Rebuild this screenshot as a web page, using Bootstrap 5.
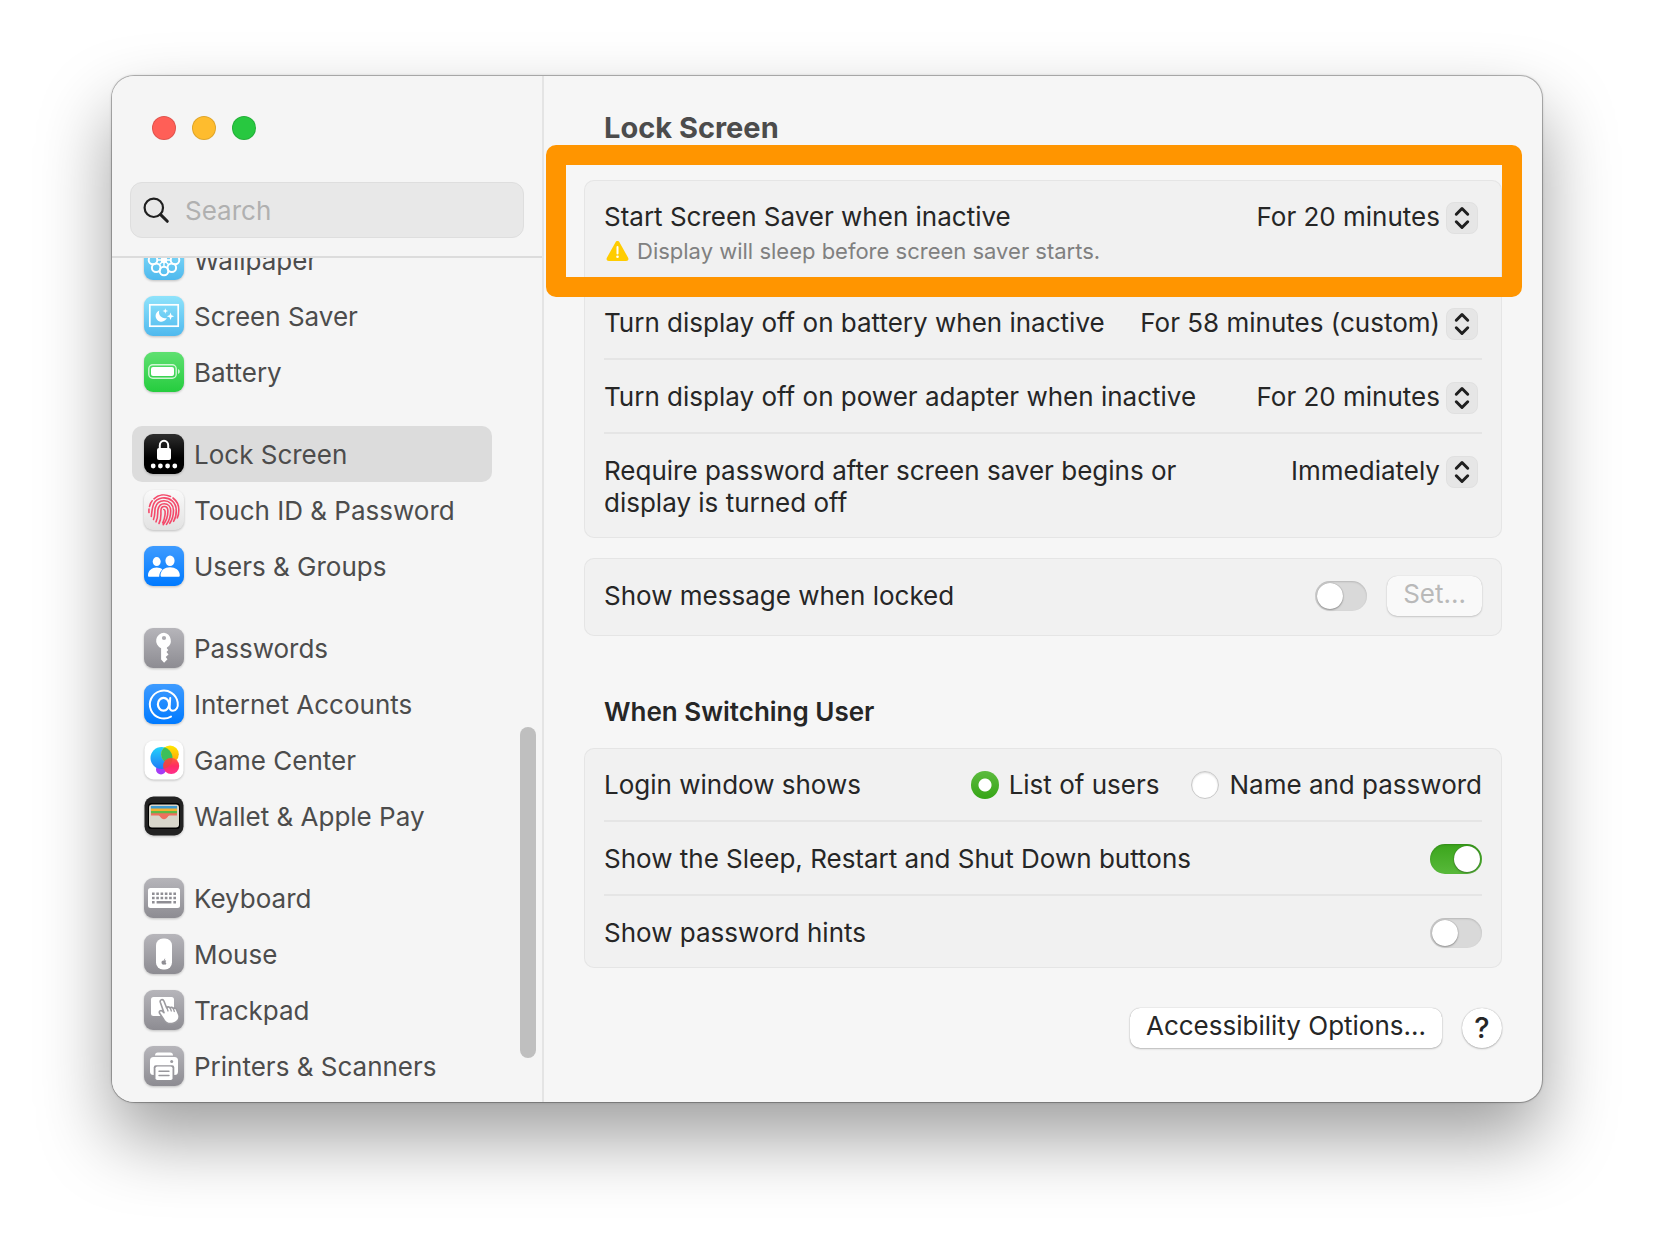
<!DOCTYPE html>
<html lang="en">
<head>
<meta charset="utf-8">
<meta name="viewport" content="width=device-width, initial-scale=1">
<title>Lock Screen</title>
<link href="https://cdn.jsdelivr.net/npm/bootstrap@5.3.0/dist/css/bootstrap.min.css" rel="stylesheet">
<style>
body{background:#fff;color:#262626;font:400 26px/32px Inter,"Liberation Sans",sans-serif;padding:76px 112px 148px}
.window{background:#f6f6f6;border-radius:22px;box-shadow:0 0 0 1px rgba(0,0,0,.22),0 0 3px rgba(0,0,0,.3),0 36px 72px rgba(0,0,0,.38)}
.sidebar{width:432px;color:#4c4c4c;background:#f5f5f5;border-right:2px solid #e4e4e4;border-radius:22px 0 0 22px}
.side-head{padding:40px 18px 18px;border-bottom:2px solid #dcdcdc}
.lights{gap:16px;padding-left:22px;margin-bottom:42px}
.light{width:24px;height:24px;border:1px solid rgba(0,0,0,.12);border-radius:50%;padding:0}
.light.red{background:#ff5f57}.light.amber{background:#febc2e}.light.green{background:#28c840}
.search{height:56px;background:#e8e8e8;border:1px solid #dedede;border-radius:12px;padding:0 12px;gap:14px}
.search input{background:none;border:0;outline:0;color:#262626;padding:2px 0 0;min-width:0}
.search input::placeholder{color:#b0b0b0;opacity:1}
.side-scroll{overflow:hidden;padding:0 50px 8px 20px}
.side-list{margin-top:-26px;gap:26px}
.side-link{height:56px;padding:2px 0 0 12px;gap:10px;border-radius:10px;color:#4c4c4c;text-decoration:none;white-space:nowrap}
.side-link.active{background:#dcdcdc}
.side-link svg{width:40px;height:40px;margin-bottom:2px;flex:none;filter:drop-shadow(0 1px 1px rgba(0,0,0,.22));overflow:visible}
.thumb{width:16px;height:331px;right:6px;bottom:44px;border-radius:8px;background:#bfbfbf}
.content{padding:32px 40px 54px;min-width:0}
.content h1{font-size:29px;line-height:40px;font-weight:700;color:#4c4c4c;margin:0 0 32px;padding-left:20px}
.content h2{font-size:26px;line-height:32px;font-weight:600;margin:60px 0 20px;padding-left:20px}
.panel{--bs-card-bg:#f1f1f1;--bs-card-border-radius:10px;box-shadow:inset 0 0 0 1px #e5e5e5;padding:0 20px;color:inherit}
.panel + .panel{margin-top:20px}
.setting{padding:21px 0 19px;border-bottom:2px solid #e5e5e5;gap:16px}
.setting:last-child{border-bottom:0}
.panel .setting.tight{padding:18px 0 20px;gap:20px}
.note{font-size:22px;color:#808080;gap:6px;margin:2px 0 -2px}
.callout-frame{inset:-35px -40px -13px -58px;border:20px solid #ff9500;border-radius:10px;pointer-events:none;z-index:2}
.popup{padding-right:4px}
.popup select{appearance:none;border:0;background:none;color:inherit;font:inherit;height:32px;padding:0 38px 0 0;text-align-last:right;outline:0}
.popup svg{right:4px;top:1px;pointer-events:none}
.toggle.form-check-input{appearance:none;width:52px;height:30px;margin:0;border:0;border-radius:15px;background:#d9d9d9;box-shadow:inset 0 1px 2px rgba(0,0,0,.16);padding:2px;display:block}
.toggle::before{content:"";display:block;width:26px;height:26px;border-radius:50%;background:#fff;box-shadow:0 0 1px rgba(0,0,0,.4),0 1px 2px rgba(0,0,0,.3)}
.toggle.form-check-input:checked{background:linear-gradient(#3ba51c,#58b93a)}
.toggle:checked::before{margin-left:22px}
.choices{gap:32px}
.choice{gap:10px}
.choice .form-check-input{width:28px;height:28px;margin:0;border:1px solid #c8c8c8;background:#fff;box-shadow:inset 0 1px 2px rgba(0,0,0,.15);float:none}
.choice .form-check-input:checked{border:0;background:radial-gradient(circle,#fff 6px,transparent 7px),linear-gradient(#5cbb3e,#36a516);box-shadow:none}
.push{--bs-btn-bg:#fff;--bs-btn-color:#262626;--bs-btn-border-width:0;--bs-btn-font-size:26px;--bs-btn-line-height:32px;--bs-btn-border-radius:10px;--bs-btn-disabled-bg:#f9f9f9;--bs-btn-disabled-color:#b9b9b9;--bs-btn-disabled-opacity:1;height:40px;padding:2px 16px 6px;box-shadow:0 0 1px rgba(0,0,0,.35),0 1px 2px rgba(0,0,0,.22)}
.push:disabled{box-shadow:0 0 1px rgba(0,0,0,.2),0 1px 2px rgba(0,0,0,.16)}
.help{width:40px;border-radius:50%;padding:4px 0;font-weight:500;--bs-btn-font-size:29px}
.foot{gap:20px;margin-top:40px}
</style>
</head>
<body>
<svg width="0" height="0" class="position-absolute" aria-hidden="true">
  <defs>
    <linearGradient id="gSky" x2="0" y2="1"><stop stop-color="#8fe3fb"/><stop offset="1" stop-color="#4fb9ee"/></linearGradient>
    <linearGradient id="gGreen" x2="0" y2="1"><stop stop-color="#5fe071"/><stop offset="1" stop-color="#25cc3e"/></linearGradient>
    <linearGradient id="gBlack" x2="0" y2="1"><stop stop-color="#2e2e2e"/><stop offset=".6" stop-color="#000"/></linearGradient>
    <linearGradient id="gPale" x2="0" y2="1"><stop stop-color="#fafafa"/><stop offset="1" stop-color="#e2e2e2"/></linearGradient>
    <linearGradient id="gBlue" x2="0" y2="1"><stop stop-color="#3e9bff"/><stop offset="1" stop-color="#007aff"/></linearGradient>
    <linearGradient id="gGrey" x2="0" y2="1"><stop stop-color="#b6b5ba"/><stop offset="1" stop-color="#8d8c92"/></linearGradient>
    <linearGradient id="gcBlue" x2="0" y2="1"><stop stop-color="#22d3fb"/><stop offset="1" stop-color="#1f7bf6"/></linearGradient>
    <linearGradient id="gcYellow" x2="0" y2="1"><stop stop-color="#ffe800"/><stop offset="1" stop-color="#ff9d0a"/></linearGradient>
    <linearGradient id="gcRed" x2="0" y2="1"><stop stop-color="#ff5a3c"/><stop offset=".5" stop-color="#ff2d62"/><stop offset="1" stop-color="#ff2f8e"/></linearGradient>
    <clipPath id="gcClip"><circle cx="17.500" cy="18" r="11"/></clipPath>
    <symbol id="stepper" viewBox="0 0 32 32"><rect x=".5" y=".5" width="31" height="31" rx="7.500" fill="#e6e6e6" stroke="#e0e0e0"/><path d="M10.300 12.200 16 6.500l5.700 5.700M10.300 19.800l5.700 5.700 5.700-5.700" fill="none" stroke="#1f1f1f" stroke-width="3" stroke-linecap="round" stroke-linejoin="round"/></symbol>
  </defs>
</svg>

<div class="window d-flex">
  <aside class="sidebar flex-shrink-0 d-flex flex-column position-relative">
    <div class="side-head">
      <div class="lights d-flex">
        <button class="light red" type="button" aria-label="Close"></button>
        <button class="light amber" type="button" aria-label="Minimise"></button>
        <button class="light green" type="button" aria-label="Zoom"></button>
      </div>
      <label class="search d-flex align-items-center">
        <svg width="28" height="28" viewBox="0 0 28 28" class="flex-shrink-0" fill="none" stroke="#1f1f1f" stroke-linecap="round" aria-hidden="true"><circle cx="10.800" cy="11.800" r="9.200" stroke-width="2.200"/><path d="m17.600 18.600 6.700 6.700" stroke-width="3"/></svg>
        <input type="search" class="flex-grow-1" placeholder="Search" aria-label="Search">
      </label>
    </div>
    <div class="side-scroll flex-grow-1">
      <nav class="side-list d-flex flex-column">
        <div>
          <a href="#" class="side-link d-flex align-items-center">
            <svg viewBox="0 0 40 40"><rect width="40" height="40" rx="9" fill="url(#gSky)"/><g fill="none" stroke="#fff" stroke-width="2"><circle cx="20" cy="20" r="2.200"/><circle cx="20" cy="9" r="4.300"/><circle cx="27.800" cy="12.200" r="4.300"/><circle cx="31" cy="20" r="4.300"/><circle cx="27.800" cy="27.800" r="4.300"/><circle cx="20" cy="31" r="4.300"/><circle cx="12.200" cy="27.800" r="4.300"/><circle cx="9" cy="20" r="4.300"/><circle cx="12.200" cy="12.200" r="4.300"/><path d="M20 13v14M13 20h14M15 15l10 10M25 15 15 25" stroke-width="1.400"/></g></svg>
            Wallpaper</a>
          <a href="#" class="side-link d-flex align-items-center">
            <svg viewBox="0 0 40 40"><rect width="40" height="40" rx="9" fill="url(#gSky)"/><rect x="5.800" y="8.800" width="28.400" height="21.400" fill="none" stroke="#fff" stroke-width="1.700"/><path d="M15.300 14.500a5.800 5.800 0 1 0 7.500 7.500 6 6 0 0 1-7.500-7.500z" fill="#fff"/><path d="m21.300 12.200.7 2.100 2.100.7-2.100.7-.7 2.100-.7-2.100-2.100-.7 2.100-.7zM26.500 16.500l1 2.700 2.700 1-2.700 1-1 2.700-1-2.700-2.700-1 2.700-1z" fill="#fff"/></svg>
            Screen Saver</a>
          <a href="#" class="side-link d-flex align-items-center">
            <svg viewBox="0 0 40 40"><rect width="40" height="40" rx="9" fill="url(#gGreen)"/><rect x="4.800" y="12.800" width="27.400" height="13.400" rx="4" fill="none" stroke="#fff" stroke-opacity=".75" stroke-width="1.400"/><rect x="7" y="15" width="23" height="9" rx="2" fill="#fff"/><path d="M34 17v5c2.300-.8 2.300-4.200 0-5z" fill="#fff" fill-opacity=".75"/></svg>
            Battery</a>
        </div>
        <div>
          <a href="#" class="side-link active d-flex align-items-center" aria-current="page">
            <svg viewBox="0 0 40 40"><rect width="40" height="40" rx="9" fill="url(#gBlack)"/><path d="M15.800 15v-3.500a4.200 4.700 0 0 1 8.400 0V15" fill="none" stroke="#fff" stroke-width="2"/><rect x="13" y="14" width="14" height="12" rx="2" fill="#fff"/><g fill="#fff"><circle cx="9.200" cy="32" r="2.400"/><circle cx="16.400" cy="32" r="2.400"/><circle cx="23.600" cy="32" r="2.400"/><circle cx="30.800" cy="32" r="2.400"/></g></svg>
            Lock Screen</a>
          <a href="#" class="side-link d-flex align-items-center">
            <svg viewBox="0 0 40 40"><rect width="40" height="40" rx="9" fill="url(#gPale)"/><g fill="none" stroke="#f4496a" stroke-width="1.600" stroke-linecap="round"><path d="M10 8.800a15 15 0 0 1 16.500-2.300M29 8a15 15 0 0 1 5.800 12.500c0 3-.5 5.500-1.500 7.500M5.500 16.500C6.200 13.500 7 12 8.200 10.800M5 22.500c-.2-1.200-.1-2.200 0-3.400M7.300 26.500C8.400 17 8.500 9.500 18 8c8-1 14.300 4.500 14.300 12.500 0 4.500-1 8-2.700 10.800M9.500 29.500c1.800-4 1-8 1.700-11.500C12.500 13 16 10.800 20 10.800c5.500 0 9.500 4 9.500 9.500 0 5.500-1.300 9.500-3.700 13M12 31.800c2.600-5 1.300-9 2-12.300.8-3.500 3-5.800 6.200-5.800 4 0 6.500 3 6.500 7 0 5.500-1.500 10-4.200 13.700M15 33.500c2.500-4.500 1.900-8.500 1.900-12.500 0-2.500 1.200-4.500 3.400-4.500s3.600 1.700 3.600 4.500c0 5-1.500 9.800-4.700 13.700M19.800 19.500c1.600 0 1.400 3 1.200 5.500-.3 3-1.100 5.500-2.300 7.800"/></g></svg>
            Touch ID &amp; Password</a>
          <a href="#" class="side-link d-flex align-items-center">
            <svg viewBox="0 0 40 40"><rect width="40" height="40" rx="9" fill="url(#gBlue)"/><g fill="#fff"><ellipse cx="12.700" cy="15.600" rx="4" ry="4.500"/><path d="M4 29.500c0-5 3.900-8 8.700-8 2.300 0 4.300.7 5.700 1.900-2 1.700-3.100 4-3.200 7.400H5.300c-.9 0-1.300-.4-1.300-1.300z"/><ellipse cx="26" cy="14.800" rx="4.600" ry="5.200"/><path d="M16.500 29.300c0-5.200 4.400-8.100 9.500-8.100s9.800 2.900 9.800 8.100c0 1-.5 1.500-1.500 1.500H18c-1 0-1.500-.5-1.500-1.500z"/></g></svg>
            Users &amp; Groups</a>
        </div>
        <div>
          <a href="#" class="side-link d-flex align-items-center">
            <svg viewBox="0 0 40 40"><rect width="40" height="40" rx="9" fill="url(#gGrey)"/><path fill-rule="evenodd" fill="#fff" d="M20 4.800a8 8 0 0 0-2.900 15.400v11.300l3 3.300 3.400-3.500-1.800-2.300 2.800-2.500-2-2.500 1.800-2-1.400-1.600v-.8A8 8 0 0 0 20 4.800zm0 3.100a2.100 2.100 0 1 1 0 4.200 2.100 2.100 0 0 1 0-4.200z"/></svg>
            Passwords</a>
          <a href="#" class="side-link d-flex align-items-center">
            <svg viewBox="0 0 40 40"><rect width="40" height="40" rx="9" fill="url(#gBlue)"/><g fill="none" stroke="#fff" stroke-linecap="round"><path d="M27 32.600a14 14 0 1 1 6.700-14.100c.7 4.500-1.300 8.300-4.700 8.300-2.400 0-3.500-1.600-3.300-4.300l.5-8.500" stroke-width="2"/><ellipse cx="19.500" cy="20.200" rx="5.600" ry="6.400" stroke-width="2.200"/></g></svg>
            Internet Accounts</a>
          <a href="#" class="side-link d-flex align-items-center">
            <svg viewBox="0 0 40 40"><rect x=".5" y=".5" width="39" height="39" rx="9" fill="#fff"/><circle cx="17" cy="29.500" r="5" fill="#a43bf5"/><circle cx="17.500" cy="18" r="11" fill="url(#gcBlue)"/><circle cx="26" cy="14.200" r="8.800" fill="url(#gcYellow)"/><circle cx="26" cy="14.200" r="8.800" fill="#3cbf5a" clip-path="url(#gcClip)"/><circle cx="27.200" cy="26" r="8" fill="url(#gcRed)"/><circle cx="27.200" cy="26" r="8" fill="#e64a3f" fill-opacity=".7" clip-path="url(#gcClip)"/></svg>
            Game Center</a>
          <a href="#" class="side-link d-flex align-items-center">
            <svg viewBox="0 0 40 40"><rect x=".5" y=".5" width="39" height="39" rx="9" fill="#222"/><rect x="4" y="7" width="32" height="26" rx="3.500" fill="#000"/><rect x="5" y="8.500" width="30" height="23" rx="3" fill="#d8d6cb"/><path d="M7 10h26v3H7z" fill="#3e9bd0"/><path d="M7 12.500h26v3H7z" fill="#f5b02e"/><path d="M7 15h26v3H7z" fill="#5cb946"/><path d="M7 17.200h26v2.300h-7.500c-1.800 0-2 3.700-5.500 3.700s-3.700-3.700-5.500-3.700H7z" fill="#ee6f5e"/></svg>
            Wallet &amp; Apple Pay</a>
        </div>
        <div>
          <a href="#" class="side-link d-flex align-items-center">
            <svg viewBox="0 0 40 40"><rect width="40" height="40" rx="9" fill="url(#gGrey)"/><rect x="4" y="10" width="32" height="20" rx="2.500" fill="#fff"/><path d="M8 15.700h24M8 20h24" stroke="#8f8e94" stroke-width="2.400" stroke-dasharray="2.600 1.680"/><path d="M8 24.300h2.600M12.600 24.300h14.800M29.400 24.300H32" stroke="#8f8e94" stroke-width="2.400"/></svg>
            Keyboard</a>
          <a href="#" class="side-link d-flex align-items-center">
            <svg viewBox="0 0 40 40"><rect width="40" height="40" rx="9" fill="url(#gGrey)"/><rect x="12" y="4.500" width="16" height="31" rx="7" fill="#fff"/><path d="M20 26.600c.8-.5 1.700-.4 2.200.2-.9.800-.8 2 .2 2.600-.5 1.200-1.200 1.600-2.200 1.200-1.500.5-2.800-.6-2.700-2.300.1-1.500 1.300-2.200 2.500-1.700zM20 26.200c0-.8.500-1.400 1.300-1.600 0 .9-.5 1.500-1.300 1.600z" fill="#8f8e94"/></svg>
            Mouse</a>
          <a href="#" class="side-link d-flex align-items-center">
            <svg viewBox="0 0 40 40"><rect width="40" height="40" rx="9" fill="url(#gGrey)"/><rect x="7" y="7" width="23" height="19" rx="2.500" fill="#fff"/><path d="M16.300 12.200c-.8-2.500 2.600-3.700 3.600-1.200l2.700 6.800c.8-1.300 2.700-1.200 3.300.1 1-1 2.800-.6 3.300.6 1.200-.8 2.900-.1 3.400 1.200l2.300 5.300c1.200 4.500-2.400 7.600-5.800 8.300-4 1-7.400-.4-9.500-4l-4-6c-1-2 1.200-3.500 2.700-2.200l1.700 1.600z" fill="#fff" stroke="#9b9a9f" stroke-width="1.600" stroke-linejoin="round"/><path d="m23 18 1 3M26.300 18l1 3M29.500 19l.8 2.500" stroke="#9b9a9f" stroke-width="1.300" stroke-linecap="round"/></svg>
            Trackpad</a>
          <a href="#" class="side-link d-flex align-items-center">
            <svg viewBox="0 0 40 40"><rect width="40" height="40" rx="9" fill="url(#gGrey)"/><path d="M11 9.400c0-1.800 1-2.900 2.800-2.900h12.400c1.800 0 2.800 1.100 2.800 2.900z" fill="#fff"/><rect x="6" y="11" width="28" height="18" rx="3.500" fill="#fff"/><circle cx="27.700" cy="15.500" r="1.500" fill="#9b9a9f"/><path d="M9.700 29.500V21.500a2.200 2.200 0 0 1 2.200-2.200h16.200a2.200 2.200 0 0 1 2.200 2.200v8" fill="#98979c"/><rect x="11.500" y="20.500" width="17" height="13.500" rx="1.800" fill="#fff"/><path d="M15 25.300h10M15 29.500h10" stroke="#98979c" stroke-width="1.400" stroke-linecap="round"/></svg>
            Printers &amp; Scanners</a>
        </div>
      </nav>
    </div>
    <div class="thumb position-absolute"></div>
  </aside>

  <main class="content flex-grow-1">
    <h1>Lock Screen</h1>

    <section class="card panel border-0">
      <div class="setting d-flex align-items-start justify-content-between position-relative">
        <div>
          <label for="saver">Start Screen Saver when inactive</label>
          <div class="note d-flex align-items-center">
            <svg width="27" height="24" viewBox="-1 0 27 24" aria-hidden="true"><path d="M10.400 3.400 1.900 18.700c-1 2 .2 3.300 2 3.300h17.200c1.800 0 3-1.300 2-3.300L14.600 3.400c-.9-1.900-3.300-1.900-4.200 0z" fill="#ffcc00"/><path d="M12.500 8v6.500" stroke="#fff" stroke-width="2" stroke-linecap="round"/><circle cx="12.500" cy="17.800" r="1.300" fill="#fff"/></svg>
            Display will sleep before screen saver starts.
          </div>
        </div>
        <div class="popup position-relative flex-shrink-0">
          <select id="saver"><option>For 20 minutes</option></select>
          <svg class="position-absolute" width="32" height="32" aria-hidden="true"><use href="#stepper"/></svg>
        </div>
        <div class="callout-frame position-absolute"></div>
      </div>
      <div class="setting d-flex align-items-start justify-content-between">
        <label for="battery">Turn display off on battery when inactive</label>
        <div class="popup position-relative flex-shrink-0">
          <select id="battery"><option>For 58 minutes (custom)</option></select>
          <svg class="position-absolute" width="32" height="32" aria-hidden="true"><use href="#stepper"/></svg>
        </div>
      </div>
      <div class="setting d-flex align-items-start justify-content-between">
        <label for="adapter">Turn display off on power adapter when inactive</label>
        <div class="popup position-relative flex-shrink-0">
          <select id="adapter"><option>For 20 minutes</option></select>
          <svg class="position-absolute" width="32" height="32" aria-hidden="true"><use href="#stepper"/></svg>
        </div>
      </div>
      <div class="setting d-flex align-items-start justify-content-between">
        <label for="require">Require password after screen saver begins or<br>display is turned off</label>
        <div class="popup position-relative flex-shrink-0">
          <select id="require"><option>Immediately</option></select>
          <svg class="position-absolute" width="32" height="32" aria-hidden="true"><use href="#stepper"/></svg>
        </div>
      </div>
    </section>

    <section class="card panel border-0">
      <div class="setting tight d-flex align-items-center">
        <label for="message" class="me-auto">Show message when locked</label>
        <input class="form-check-input toggle" type="checkbox" role="switch" id="message">
        <button class="btn push" type="button" disabled>Set...</button>
      </div>
    </section>

    <h2>When Switching User</h2>
    <section class="card panel border-0">
      <div class="setting d-flex align-items-center justify-content-between">
        <span id="login-label">Login window shows</span>
        <div class="choices d-flex" role="radiogroup" aria-labelledby="login-label">
          <div class="choice d-flex align-items-center"><input class="form-check-input" type="radio" name="login" id="list" checked><label for="list">List of users</label></div>
          <div class="choice d-flex align-items-center"><input class="form-check-input" type="radio" name="login" id="named"><label for="named">Name and password</label></div>
        </div>
      </div>
      <div class="setting d-flex align-items-center justify-content-between">
        <label for="power">Show the Sleep, Restart and Shut Down buttons</label>
        <input class="form-check-input toggle" type="checkbox" role="switch" id="power" checked>
      </div>
      <div class="setting d-flex align-items-center justify-content-between">
        <label for="hints">Show password hints</label>
        <input class="form-check-input toggle" type="checkbox" role="switch" id="hints">
      </div>
    </section>

    <div class="foot d-flex justify-content-end">
      <button class="btn push" type="button">Accessibility Options...</button>
      <button class="btn push help" type="button" aria-label="Help">?</button>
    </div>
  </main>
</div>
<script src="https://cdn.jsdelivr.net/npm/bootstrap@5.3.0/dist/js/bootstrap.bundle.min.js"></script>
</body>
</html>
